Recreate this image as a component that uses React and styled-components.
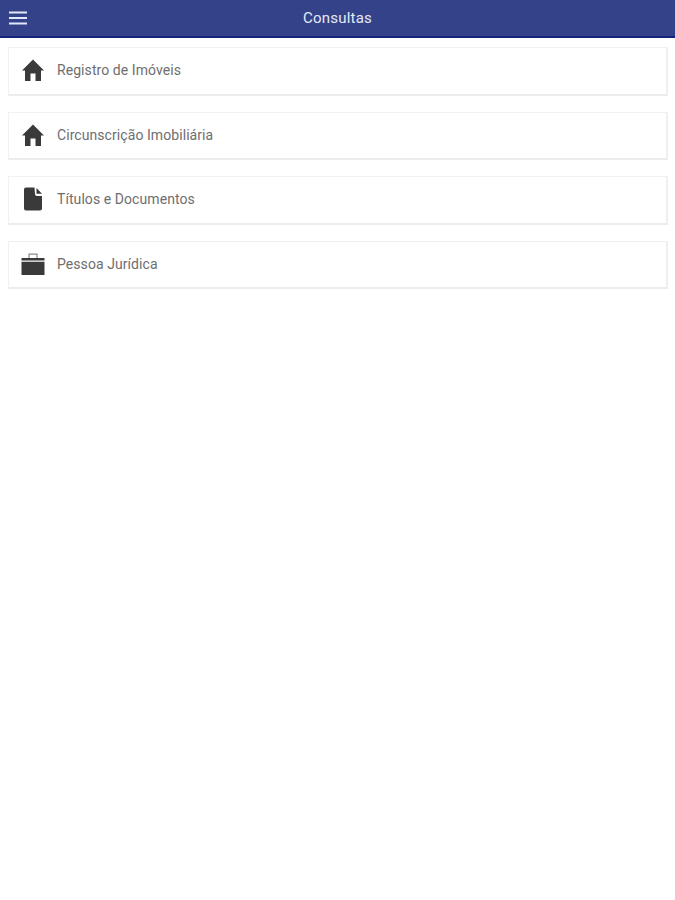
import React from "react";
import styled, { createGlobalStyle } from "styled-components";

const Global = createGlobalStyle`
  html, body { margin: 0; padding: 0; background: #fff; }
  body { font-family: Roboto, "Liberation Sans", sans-serif; }
`;
const Page = styled.div`
  width: 675px;
  min-height: 900px;
  background: #fff;
  overflow: hidden;
`;
const Header = styled.header`
  box-sizing: border-box;
  height: 38px;
  background: #344389;
  border-bottom: 2px solid #14237c;
  display: flex;
  align-items: center;
  padding-left: 9px;
  position: relative;
`;
const Menu = styled.svg`
  display: block;
  width: 18px;
  height: 14px;
`;
const Title = styled.h1`
  position: absolute;
  left: 0;
  right: 0;
  margin: 0;
  text-align: center;
  color: #e6e9f6;
  font-size: 15px;
  font-weight: 400;
  letter-spacing: 0.2px;
`;
const List = styled.main`
  display: flex;
  flex-direction: column;
  gap: 16px;
  padding: 9px 7px 0 8px;
`;
const Card = styled.div`
  box-sizing: border-box;
  height: 48.5px;
  background: #fff;
  border: 1px solid #f1f1f1;
  border-bottom: 2px solid #ececec;
  border-right: 2px solid #efefef;
  display: flex;
  align-items: center;
  padding: 0 0 1px 12px;
`;
const IconBox = styled.span`
  width: 24px;
  height: 24px;
  display: flex;
  align-items: center;
  justify-content: center;
  margin-right: 12px;
  flex: none;
`;
const Label = styled.span`
  color: #6e6e6e;
  font-size: 14px;
  letter-spacing: 0.07px;
`;

const House = () => (
  <svg width="24" height="24" viewBox="0 0 24 24">
    <path fill="#3a3a3a" d="M12 1.5 L23 12.5 H20 V23 H14.5 V15.5 H9.5 V23 H4 V12.5 H1 Z" />
  </svg>
);
const Doc = () => (
  <svg width="24" height="24" viewBox="0 0 24 24">
    <path fill="#3a3a3a" d="M5 0.5 H13.5 L14 7 Q14 9 16 9 H21 V21.5 Q21 23.5 19 23.5 H5 Q3 23.5 3 21.5 V2.5 Q3 0.5 5 0.5 Z" />
    <path fill="#3a3a3a" d="M15.5 1 L21 6.8 H15.5 Z" />
  </svg>
);
const Case = () => (
  <svg width="24" height="24" viewBox="0 0 24 24">
    <path fill="none" stroke="#8a8a8a" strokeWidth="1.2" d="M8 6 V2.2 H16 V6" />
    <path fill="#3a3a3a" d="M0.5 6 H23.5 V8.6 H0.5 Z M0.5 9.8 H23.5 V23 H0.5 Z" />
  </svg>
);

const items = [
  { label: "Registro de Imóveis", Icon: House },
  { label: "Circunscrição Imobiliária", Icon: House },
  { label: "Títulos e Documentos", Icon: Doc },
  { label: "Pessoa Jurídica", Icon: Case },
];

export default function App() {
  return (
    <Page>
      <Global />
      <Header>
        <Menu viewBox="0 0 18 14">
          <rect y="0.5" width="18" height="2" fill="#e3e7fa" />
          <rect y="6" width="18" height="2" fill="#e3e7fa" />
          <rect y="11.5" width="18" height="2" fill="#e3e7fa" />
        </Menu>
        <Title>Consultas</Title>
      </Header>
      <List>
        {items.map(({ label, Icon }) => (
          <Card key={label}>
            <IconBox><Icon /></IconBox>
            <Label>{label}</Label>
          </Card>
        ))}
      </List>
    </Page>
  );
}
